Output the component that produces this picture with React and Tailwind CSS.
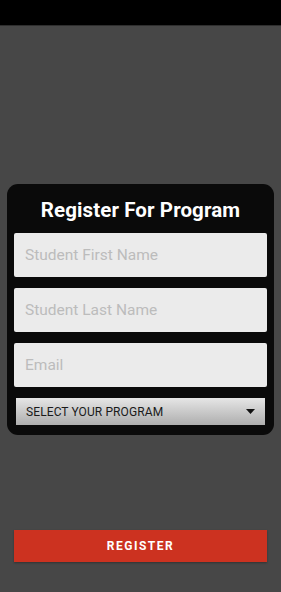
export default function App() {
  const fields = ['Student First Name', 'Student Last Name', 'Email'];

  return (
    <div className="flex flex-col h-[592px] bg-[#474747] font-['Roboto',sans-serif] overflow-hidden">
      <div className="h-[26px] bg-black border-b border-[#2e2e2e]" />

      <div className="mt-[158px] mx-[7px] rounded-[11px] bg-[#0a0a0a] px-[7px] pt-[12px] pb-[10px]">
        <h1 className="text-center text-white text-[20.5px] font-bold leading-[28px] tracking-[0.1px]">
          Register For Program
        </h1>
        <div className="mt-[9px] flex flex-col gap-[11px]">
          {fields.map((label) => (
            <input
              key={label}
              type="text"
              placeholder={label}
              className="h-[44px] w-full rounded-[2px] bg-[#ebebeb] px-[11px] text-[15.5px] text-[#333] placeholder:text-[#bcbcbc] outline-none"
            />
          ))}
        </div>
        <div className="mx-[2px] mt-[11px] flex h-[27px] items-center justify-between bg-gradient-to-b from-[#e6e6e6] to-[#aeaeae] pl-[10px] pr-[10px]">
          <span className="text-[12px] text-[#1a1a1a] tracking-[0.1px]">SELECT YOUR PROGRAM</span>
          <svg width="9" height="5" viewBox="0 0 9 5">
            <path d="M0 0h9L4.5 5z" fill="#111" />
          </svg>
        </div>
      </div>

      <div className="mt-auto mb-[30px] mx-[14px]">
        <button
          type="button"
          className="h-[32px] w-full bg-[#cc3220] text-white text-[12px] font-bold tracking-[1.5px] shadow-[0_1px_2px_rgba(0,0,0,0.3)]"
        >
          REGISTER
        </button>
      </div>
    </div>
  );
}
